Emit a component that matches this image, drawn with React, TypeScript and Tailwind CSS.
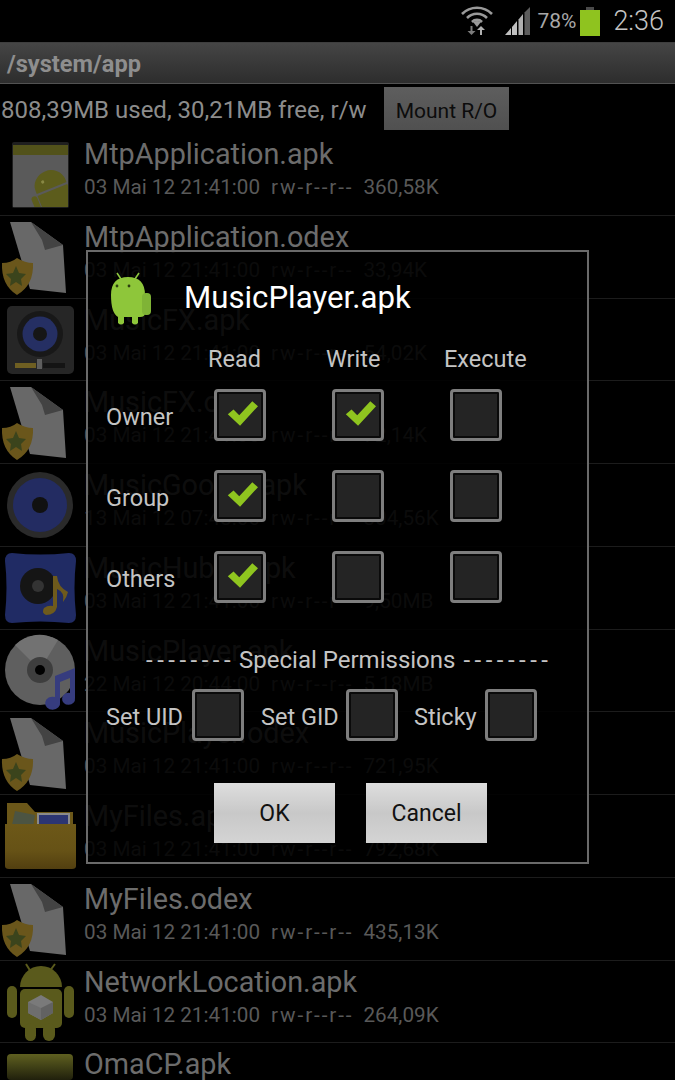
import React from "react";

type RowData = { name: string; date: string; size: string; icon: React.ReactNode };

function Svg({ children }: { children: React.ReactNode }) {
  return (
    <svg width="85" height="82" viewBox="0 0 85 82" className="mr-[-1px] shrink-0">
      {children}
    </svg>
  );
}

function OdexIcon() {
  return (
    <Svg>
      <path d="M10 6 L31 6 L63 29 L66 77 L30 73 Z" fill="#686868" />
      <path d="M31 6 L42 24 L45 34 L63 29 Z" fill="#434343" />
      <path d="M2 47 Q11 47 17 42 Q25 47 33 47 Q34 69 17 79 Q1 69 2 47 Z" fill="#6a561b" />
      <path d="M16 50 L19 57 L26 58 L21 63 L22 70 L16 66 L10 70 L11 63 L6 58 L13 57 Z" fill="#3b441c" />
    </Svg>
  );
}

function ApkIcon() {
  return (
    <Svg>
      <defs>
        <clipPath id="apkclip">
          <rect x="13" y="11" width="55" height="63" />
        </clipPath>
      </defs>
      <rect x="12" y="9" width="57" height="66" rx="2" fill="#1f1f1f" />
      <rect x="13" y="12" width="55" height="10" fill="#52521a" />
      <rect x="13" y="22" width="55" height="52" fill="#5a5a5a" />
      <g clipPath="url(#apkclip)">
        <g transform="rotate(-22 52 56)">
          <path d="M36 52 a16 15 0 0 1 32 0 v3 h-32 Z" fill="#5c5c1c" />
          <rect x="36" y="57" width="32" height="26" fill="#5c5c1c" />
          <rect x="29" y="56" width="6" height="18" rx="3" fill="#5c5c1c" />
          <circle cx="46" cy="46" r="1.600" fill="#888844" />
        </g>
      </g>
    </Svg>
  );
}

function SpeakerFxIcon() {
  return (
    <Svg>
      <rect x="7" y="7" width="67" height="68" rx="5" fill="#262626" />
      <circle cx="40" cy="35" r="23" fill="#181818" />
      <circle cx="40" cy="35" r="17.500" fill="#252f63" />
      <circle cx="40" cy="35" r="7" fill="#161616" />
      <rect x="15" y="64" width="21" height="5" fill="#6f5f22" />
      <rect x="37" y="60" width="5" height="10" fill="#5e5e5e" />
      <rect x="43" y="64" width="22" height="5" fill="#141414" />
    </Svg>
  );
}

function SpeakerIcon() {
  return (
    <Svg>
      <circle cx="40" cy="41" r="33" fill="#2a2a2a" />
      <circle cx="40" cy="41" r="27" fill="#232c62" />
      <circle cx="40" cy="41" r="8" fill="#111" />
    </Svg>
  );
}

function HubIcon() {
  return (
    <Svg>
      <path d="M12 6 Q40 9 69 6 Q76 6 76 14 Q73 40 76 68 Q76 76 69 76 Q40 73 12 76 Q5 76 5 68 Q8 40 5 14 Q5 6 12 6 Z" fill="#202b64" />
      <circle cx="38" cy="39" r="18" fill="#151515" />
      <circle cx="38" cy="39" r="6" fill="#333" />
      <path d="M53 29 L57 29 Q58 40 68 45 Q67 50 63 55 Q65 45 57 42 L57 60 Q55 68 46 68 Q41 66 44 61 Q48 58 53 59 Z" fill="#6e5a1c" />
    </Svg>
  );
}

function CdIcon() {
  return (
    <Svg>
      <circle cx="40" cy="40" r="35" fill="#5f5f5f" />
      <path d="M40 40 L15 15 A35 35 0 0 1 58 10 Z" fill="#727272" />
      <circle cx="40" cy="40" r="13" fill="#3e3e3e" />
      <circle cx="40" cy="40" r="5" fill="#000" />
      <path d="M55 46 L75 38 L75 68 A6.500 6 0 1 1 70 63 L70 48 L60 52 L60 72 A7.500 6.500 0 1 1 55 67 Z" fill="#363c7e" />
    </Svg>
  );
}

function FolderIcon() {
  return (
    <Svg>
      <defs>
        <linearGradient id="folder" x1="0" y1="0" x2="0" y2="1">
          <stop offset="0" stopColor="#6d5818" />
          <stop offset="0.6" stopColor="#665216" />
          <stop offset="1" stopColor="#523f10" />
        </linearGradient>
      </defs>
      <path d="M7 8 L27 8 L35 17 L73 17 L73 32 L7 32 Z" fill="#6b5719" />
      <path d="M15 16 L35 20 L33 32 L12 30 Z" fill="#4c5442" />
      <rect x="37" y="18" width="33" height="12" fill="#8a8a8a" />
      <rect x="39" y="20" width="29" height="10" fill="#2c3572" />
      <path d="M5 29 L76 29 L76 71 Q76 74 72 74 L9 74 Q5 74 5 71 Z" fill="url(#folder)" />
    </Svg>
  );
}

function AndroidCubeIcon() {
  return (
    <Svg>
      <path d="M26 3 L31 11 M55 3 L49 11" stroke="#5a5a1c" strokeWidth="2" />
      <path d="M20 26 a21 21 0 0 1 42 0 Z" fill="#5a5a1c" />
      <rect x="20" y="28" width="42" height="39" rx="5" fill="#5a5a1c" />
      <rect x="7" y="25" width="10" height="32" rx="5" fill="#5a5a1c" />
      <rect x="64" y="25" width="10" height="32" rx="5" fill="#5a5a1c" />
      <rect x="25" y="62" width="11" height="18" rx="5.500" fill="#5a5a1c" />
      <rect x="43" y="62" width="12" height="18" rx="6" fill="#5a5a1c" />
      <path d="M41 34 L53 41 L53 52 L41 59 L28 52 L28 41 Z" fill="#7a7a7a" />
      <path d="M41 47 L53 41 L53 52 L41 59 Z" fill="#626262" />
      <path d="M41 47 L28 41 L28 52 L41 59 Z" fill="#6e6e6e" />
    </Svg>
  );
}

function OmaIcon() {
  return (
    <Svg>
      <defs>
        <linearGradient id="oma" x1="0" y1="0" x2="0" y2="1">
          <stop offset="0" stopColor="#5f6020" />
          <stop offset="1" stopColor="#20200c" />
        </linearGradient>
      </defs>
      <rect x="7" y="11" width="66" height="26" rx="4" fill="url(#oma)" />
    </Svg>
  );
}

const rows: RowData[] = [
  { name: "MtpApplication.apk", date: "03 Mai 12 21:41:00", size: "360,58K", icon: <ApkIcon /> },
  { name: "MtpApplication.odex", date: "03 Mai 12 21:41:00", size: "33,94K", icon: <OdexIcon /> },
  { name: "MusicFX.apk", date: "03 Mai 12 21:41:00", size: "54,02K", icon: <SpeakerFxIcon /> },
  { name: "MusicFX.odex", date: "03 Mai 12 21:41:00", size: "72,14K", icon: <OdexIcon /> },
  { name: "MusicGoogle.apk", date: "13 Mai 12 07:43:00", size: "304,56K", icon: <SpeakerIcon /> },
  { name: "MusicHub_T.apk", date: "03 Mai 12 21:41:00", size: "9,50MB", icon: <HubIcon /> },
  { name: "MusicPlayer.apk", date: "22 Mai 12 20:44:00", size: "5,18MB", icon: <CdIcon /> },
  { name: "MusicPlayer.odex", date: "03 Mai 12 21:41:00", size: "721,95K", icon: <OdexIcon /> },
  { name: "MyFiles.apk", date: "03 Mai 12 21:41:00", size: "792,68K", icon: <FolderIcon /> },
  { name: "MyFiles.odex", date: "03 Mai 12 21:41:00", size: "435,13K", icon: <OdexIcon /> },
  { name: "NetworkLocation.apk", date: "03 Mai 12 21:41:00", size: "264,09K", icon: <AndroidCubeIcon /> },
  { name: "OmaCP.apk", date: "03 Mai 12 21:41:00", size: "120,44K", icon: <OmaIcon /> },
];

function Row({ row }: { row: RowData }) {
  return (
    <div className="flex h-[82.75px] shrink-0 items-start border-b border-[#1c1c1c]">
      {row.icon}
      <div className="flex min-w-0 flex-col pt-[4px]">
        <div className="h-[34px] text-[28.8px] leading-[34px] text-[#6c6c6c]">{row.name}</div>
        <div className="mt-[4px] flex h-[24px] whitespace-pre text-[20.7px] leading-[24px] text-[#595959]">
          <span>{row.date}</span>
          <span className="ml-[11px] tracking-[1.9px]">rw-r--r--</span>
          <span className="ml-[10px]">{row.size}</span>
        </div>
      </div>
    </div>
  );
}

function Check({ on }: { on?: boolean }) {
  return (
    <div className="flex h-[52px] w-[52px] shrink-0 items-center justify-center rounded-[4px] border-[3px] border-[#7e7e7e] bg-[#242424] shadow-[inset_0_0_0_2px_#0a0a0a]">
      {on && (
        <svg width="31" height="25" viewBox="0 0 38 30" className="mb-[4px] ml-[4px]">
          <path d="M1 16 L8 10 L15 17 L31 0 L38 6 L16 30 Z" fill="#8fc51f" />
        </svg>
      )}
    </div>
  );
}

function StatusBar() {
  return (
    <div className="flex h-[42px] shrink-0 items-center justify-end bg-black pr-[11px]">
      <svg width="32" height="30" viewBox="0 0 32 30" className="mr-[12px]">
        <g fill="none" stroke="#9a9a9a" strokeWidth="2.600">
          <path d="M1 8 A21 21 0 0 1 31 8" />
          <path d="M6 12 A14 14 0 0 1 26 12" />
          <path d="M11 16 A7 7 0 0 1 21 16" />
        </g>
        <path d="M16 21 L12.500 16.500 A5 5 0 0 1 19.500 16.500 Z" fill="#9a9a9a" />
        <path d="M12 21 v5 h-3 l4 4 l4 -4 h-3 v-5 Z" transform="translate(-2.500 -1)" fill="#7c7c7c" />
        <path d="M19 29 v-5 h-3 l4 -4 l4 4 h-3 v5 Z" fill="#b0b0b0" />
      </svg>
      <svg width="26" height="28" viewBox="0 0 26 28" className="mr-[6px]">
        <path d="M0 28 L6 21 L6 28 Z" fill="#c0c0c0" />
        <path d="M7 20 L12 14 L12 28 L7 28 Z" fill="#c0c0c0" />
        <path d="M13.500 12.500 L18 7 L18 28 L13.500 28 Z" fill="#b0b0b0" />
        <path d="M19.500 5.500 L25 0 L25 28 L19.500 28 Z" fill="#5c5c5c" />
      </svg>
      <span className="mr-[4px] text-[21px] leading-none text-[#a8a8a8]">78%</span>
      <div className="mr-[13px] flex flex-col items-center">
        <div className="h-[3px] w-[8px] bg-[#4a4a4a]" />
        <div className="h-[26px] w-[20px] bg-[#8fc31f]" />
      </div>
      <span className="text-[27px] font-light leading-none text-[#c4c4c4]">2:36</span>
    </div>
  );
}

function Dialog() {
  const cols = ["Read", "Write", "Execute"];
  const grid: [string, boolean, boolean, boolean][] = [
    ["Owner", true, true, false],
    ["Group", true, false, false],
    ["Others", true, false, false],
  ];
  const specials: [string, string, string][] = [
    ["Set UID", "w-[86px]", "mr-[17px]"],
    ["Set GID", "w-[85px]", "mr-[16px]"],
    ["Sticky", "w-[71px]", "mr-0"],
  ];
  return (
    <div className="absolute left-[86px] top-[250px] flex h-[614px] w-[503px] flex-col border-2 border-[#6a6a6a] bg-[rgba(0,0,0,0.88)]">
      <div className="flex h-[93px] shrink-0 items-center pb-[1px] pl-[21px]">
        <svg width="44" height="54" viewBox="0 0 44 54" className="shrink-0">
          <path d="M8 2 L12 8 M30 2 L26 8" stroke="#8cc63f" strokeWidth="1.600" />
          <path d="M2 24 Q2 6 19 6 Q36 6 36 24 L36 42 Q36 46 31 46 L29 46 L29 52 Q26 55 23 52 L23 46 L15 46 L15 52 Q12 55 9 52 L9 46 Q2 42 2 24 Z" fill="#8ec63a" />
          <rect x="33" y="22" width="9" height="22" rx="4" fill="#7fb336" />
          <circle cx="8" cy="15" r="1.400" fill="#2d3f10" />
          <circle cx="20" cy="15" r="1.400" fill="#2d3f10" />
        </svg>
        <span className="ml-[31px] text-[31.2px] leading-none text-white">MusicPlayer.apk</span>
      </div>
      <div className="grid grid-cols-[102px_118px_118px_118px] pl-[18px] text-[23.500px] leading-[28px] text-[#c4c4c4]">
        <div className="h-[44px]" />
        {cols.map((c) => (
          <div key={c} className="h-[44px]">{c}</div>
        ))}
        {grid.map(([label, a, b, c]) => (
          <React.Fragment key={label}>
            <div className="flex h-[81px] items-start pt-[14px]">{label}</div>
            {[a, b, c].map((on, i) => (
              <div key={i} className="h-[81px] pl-[6px]">
                <Check on={on} />
              </div>
            ))}
          </React.Fragment>
        ))}
      </div>
      <div className="mt-[14px] flex h-[28px] items-center pl-[58px] text-[24px] leading-[28px] text-[#c4c4c4]">
        <span className="tracking-[4.500px]">--------</span>
        <span className="ml-[4px]">Special Permissions</span>
        <span className="ml-[8px] tracking-[4.500px]">--------</span>
      </div>
      <div className="mt-[15px] flex pl-[18px] text-[23.500px] leading-[28px] text-[#c4c4c4]">
        {specials.map(([label, w, m]) => (
          <div key={label} className={`flex items-center ${m}`}>
            <span className={`${w} pt-[4px]`}>{label}</span>
            <Check />
          </div>
        ))}
      </div>
      <div className="mt-[42px] flex gap-[31px] pl-[126px]">
        {["OK", "Cancel"].map((t) => (
          <div
            key={t}
            className="flex h-[60px] w-[121px] items-center justify-center bg-gradient-to-b from-[#dedede] via-[#c8c8c8] to-[#d4d4d4] text-[23px] leading-none text-[#111]"
          >
            {t}
          </div>
        ))}
      </div>
    </div>
  );
}

export default function App() {
  return (
    <div className="relative flex h-[1080px] w-[675px] flex-col overflow-hidden bg-black font-['Roboto',sans-serif]">
      <StatusBar />
      <div className="flex h-[42px] shrink-0 items-center border-y border-t-[#3e3e3e] border-b-[#525252] bg-gradient-to-b from-[#454545] to-[#2d2d2d] pl-[7px] pt-[3px] text-[23.6px] font-bold leading-none text-[#8e8e8e]">
        /system/app
      </div>
      <div className="flex h-[49px] shrink-0 items-start pt-[3px]">
        <span className="ml-[1px] mt-[10px] w-[383px] whitespace-nowrap text-[24px] leading-[27px] text-[#8c8c8c]">808,39MB used, 30,21MB free, r/w</span>
        <div className="flex h-[43px] w-[125px] items-center justify-center bg-gradient-to-b from-[#5e5e5e] to-[#505050] pt-[5px] text-[21px] leading-none text-[#0c0c0c]">
          Mount R/O
        </div>
      </div>
      <div className="flex min-h-0 flex-col">
        {rows.map((r) => (
          <Row key={r.name} row={r} />
        ))}
      </div>
      <Dialog />
    </div>
  );
}
